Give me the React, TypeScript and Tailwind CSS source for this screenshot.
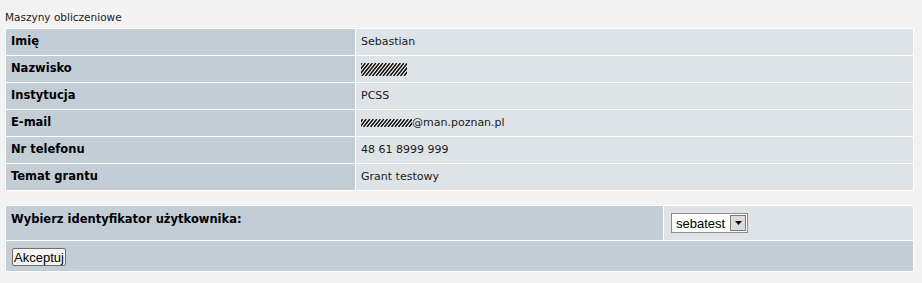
import React from "react";

const rows: { label: string; value: React.ReactNode }[] = [
  { label: "Imię", value: "Sebastian" },
  { label: "Nazwisko", value: <Scribble width={46} height={13} /> },
  { label: "Instytucja", value: "PCSS" },
  {
    label: "E-mail",
    value: (
      <span className="inline-flex items-center">
        <Scribble width={51} height={8} />
        <span>@man.poznan.pl</span>
      </span>
    ),
  },
  { label: "Nr telefonu", value: "48 61 8999 999" },
  { label: "Temat grantu", value: "Grant testowy" },
];

// hatched marker strokes hiding personal data
function Scribble({ width, height }: { width: number; height: number }) {
  const lines = [];
  for (let x = -height; x < width + height; x += 3.5) {
    lines.push(
      <line key={x} x1={x} y1={height} x2={x + height * 0.8} y2={0} stroke="#111" strokeWidth={1.6} />
    );
  }
  return (
    <svg width={width} height={height} className="block">
      <rect width={width} height={height} fill="#fff" />
      {lines}
    </svg>
  );
}

function SelectBox() {
  return (
    <div className="flex h-[20px] w-[77px] items-center border border-[#8e8e8e] bg-white">
      <span className="flex-1 pl-[4px] text-[13px] leading-none text-black [font-family:'Liberation_Sans',Arial,sans-serif]">
        sebatest
      </span>
      <span className="mr-px flex h-[16px] w-[16px] items-center justify-center border border-[#7a7a7a] bg-[#dcdcdc]">
        <svg width="7" height="4" viewBox="0 0 7 4">
          <path d="M0 0h7L3.5 4z" fill="#000" />
        </svg>
      </span>
    </div>
  );
}

export default function App() {
  return (
    <div className="h-[283px] w-[922px] bg-[#f2f2f2] pt-[10px] text-[11px] text-[#1b1b1b] [font-family:'DejaVu_Sans',Verdana,sans-serif]">
      <div className="pl-[5px] text-[10.5px] leading-[14px] text-[#222]">Maszyny obliczeniowe</div>

      <div className="mt-[4px] ml-[5px] grid w-[909px] grid-cols-[349px_1fr] gap-px bg-white p-px">
        {rows.map((r) => (
          <React.Fragment key={r.label}>
            <div className="flex h-[26px] items-center bg-[#c3cdd6] pl-[5px] text-[11.5px] font-bold text-black">
              {r.label}
            </div>
            <div className="flex h-[26px] items-center bg-[#dee3e7] pl-[5px]">{r.value}</div>
          </React.Fragment>
        ))}
      </div>

      <div className="mt-[14px] ml-[5px] grid w-[909px] grid-cols-[657px_1fr] gap-px bg-white p-px">
        <div className="h-[34px] bg-[#c3cdd6] pl-[5px] pt-[6px] text-[11.5px] font-bold leading-[14px] text-black">
          Wybierz identyfikator użytkownika:
        </div>
        <div className="h-[34px] bg-[#dee3e7] pl-[7px] pt-[7px]">
          <SelectBox />
        </div>
        <div className="col-span-2 h-[30px] bg-[#c3cdd6] pl-[6px] pt-[7px]">
          <button className="h-[18px] rounded-[2px] border border-[#6f6f6f] bg-[#f4f4f4] px-px text-[13px] leading-none text-black [font-family:'Liberation_Sans',Arial,sans-serif]">
            Akceptuj
          </button>
        </div>
      </div>
    </div>
  );
}
